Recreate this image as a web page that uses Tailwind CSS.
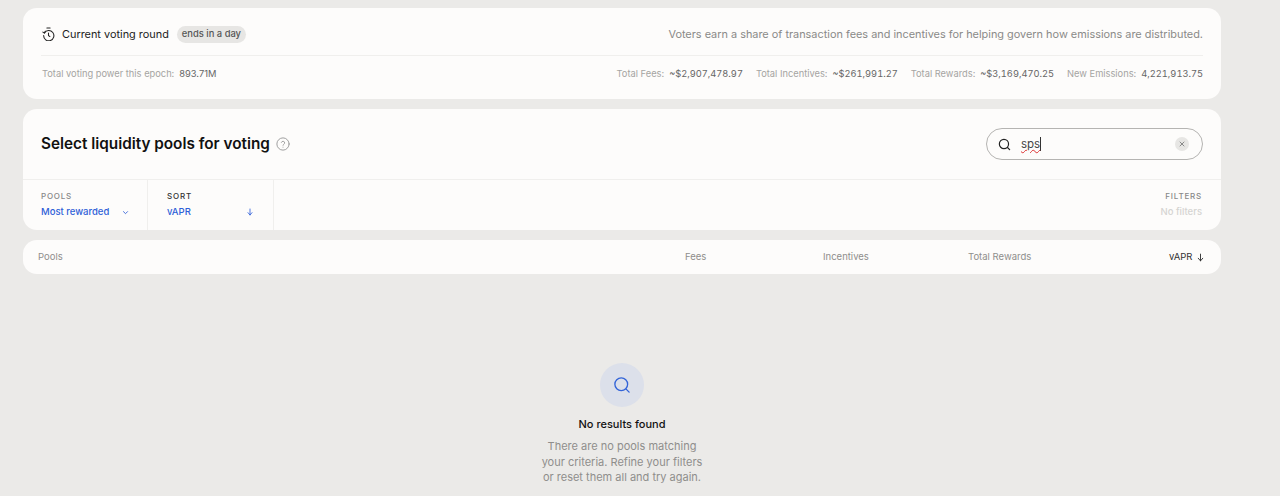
<!DOCTYPE html>
<html lang="en">
  <head>
    <meta charset="UTF-8" />
    <title>Vote</title>
    <script src="https://cdn.jsdelivr.net/npm/@tailwindcss/browser@4"></script>
  </head>
  <body class="bg-[#ebeae8] h-[496px] overflow-hidden font-['Inter',sans-serif] text-[#111]">
    <div class="w-[1198px] ml-[23px] pt-2 flex flex-col">
      <!-- current round -->
      <section class="bg-[#fdfcfb] rounded-[14px] h-[91px] px-[18px]">
        <div class="flex items-center justify-between h-[48px] pt-[5px] border-b border-[#f0efed]">
          <div class="flex items-center">
            <svg class="ml-px w-[13px] h-[14px] text-[#222]" viewBox="0 0 24 26" fill="none" stroke="currentColor" stroke-width="2" stroke-linecap="round" stroke-linejoin="round">
              <path d="M9 2h6" />
              <path d="M4.5 11A9.5 9.5 0 1 1 3 16" />
              <path d="M12 11v5l2.5 1.5" />
              <path d="M1.5 9.5 4.5 11l1.5-3" />
            </svg>
            <span class="ml-[7px] text-[10.9px] leading-4 text-[#222]">Current voting round</span>
            <span class="ml-2 h-[17px] px-[5px] rounded-full bg-[#e7e6e4] text-[#555] text-[9.4px] font-medium flex items-center">ends in a day</span>
          </div>
          <p class="text-[10.9px] text-[#8a8a88]">Voters earn a share of transaction fees and incentives for helping govern how emissions are distributed.</p>
        </div>
        <div class="flex items-center justify-between h-[36px] text-[9.3px] text-[#a5a4a2]">
          <div class="pl-px">Total voting power this epoch:<span class="ml-[5px] text-[#666]">893.71M</span></div>
          <div class="flex gap-[13px]">
            <div>Total Fees:<span class="ml-[5px] text-[#666] tabular-nums">~$2,907,478.97</span></div>
            <div>Total Incentives:<span class="ml-[5px] text-[#666] tabular-nums">~$261,991.27</span></div>
            <div>Total Rewards:<span class="ml-[5px] text-[#666] tabular-nums">~$3,169,470.25</span></div>
            <div>New Emissions:<span class="ml-[5px] text-[#666] tabular-nums">4,221,913.75</span></div>
          </div>
        </div>
      </section>

      <!-- search and filters -->
      <section class="mt-[10px] bg-[#fdfcfb] rounded-[14px] h-[121px]">
        <div class="flex items-center justify-between h-[71px] px-[18px] border-b border-[#f0efed]">
          <div class="flex items-center">
            <h1 class="text-[15.3px] font-semibold leading-5">Select liquidity pools for voting</h1>
            <svg class="ml-[6px] w-[14px] h-[14px] text-[#999]" viewBox="0 0 24 24" fill="none" stroke="currentColor" stroke-width="1.6" stroke-linecap="round" stroke-linejoin="round">
              <circle cx="12" cy="12" r="10.5" />
              <path d="M9.2 9.2a2.9 2.9 0 0 1 5.6 1c0 1.9-2.8 2.4-2.8 4" />
              <path d="M12 17.5h.01" />
            </svg>
          </div>
          <div class="w-[217px] h-8 rounded-full border border-[#b5b4b2] flex items-center pl-[11px] pr-[13px]">
            <svg class="w-[13px] h-[13px] text-[#222]" viewBox="0 0 24 24" fill="none" stroke="currentColor" stroke-width="2.2" stroke-linecap="round">
              <circle cx="11" cy="11" r="8.5" />
              <path d="m17.5 17.5 4 4" />
            </svg>
            <span class="ml-[10px] text-[11.5px] text-[#444] underline decoration-wavy decoration-[#d33] decoration-1 border-r border-[#333] leading-[14px]">sps</span>
            <span class="ml-auto w-[14px] h-[14px] rounded-full bg-[#e7e6e4] flex items-center justify-center">
              <svg class="w-2 h-2 text-[#777]" viewBox="0 0 24 24" fill="none" stroke="currentColor" stroke-width="2.5" stroke-linecap="round">
                <path d="M6 6l12 12M18 6 6 18" />
              </svg>
            </span>
          </div>
        </div>
        <div class="flex h-[50px]">
          <div class="w-[125px] px-[18px] pt-[11px] border-r border-[#f0efed]">
            <div class="text-[8px] leading-[11px] font-medium tracking-[0.1em] text-[#888]">POOLS</div>
            <div class="mt-[3px] flex items-center justify-between text-[9.5px] font-medium text-[#2f5fd8] leading-[14px]">
              Most rewarded
              <svg class="w-[7px] h-[7px]" viewBox="0 0 24 24" fill="none" stroke="currentColor" stroke-width="3" stroke-linecap="round" stroke-linejoin="round"><path d="m5 9 7 7 7-7" /></svg>
            </div>
          </div>
          <div class="w-[126px] px-[19px] pt-[11px] border-r border-[#f0efed]">
            <div class="text-[8px] leading-[11px] font-medium tracking-[0.1em] text-[#333]">SORT</div>
            <div class="mt-[3px] flex items-center justify-between text-[9.5px] font-medium text-[#2f5fd8] leading-[14px]">
              vAPR
              <svg class="w-2 h-2" viewBox="0 0 24 24" fill="none" stroke="currentColor" stroke-width="2.5" stroke-linecap="round" stroke-linejoin="round"><path d="M12 3v18M6 14l6 7 6-7" /></svg>
            </div>
          </div>
          <div class="ml-auto pr-[19px] pt-[11px] text-right">
            <div class="text-[8px] leading-[11px] font-medium tracking-[0.1em] text-[#888]">FILTERS</div>
            <div class="mt-[3px] text-[9.5px] font-medium text-[#d5d4d2] leading-[14px]">No filters</div>
          </div>
        </div>
      </section>

      <!-- table head -->
      <section class="mt-[10px] bg-[#fdfcfb] rounded-[14px] h-[34px] flex items-center pl-[15px] pr-4 text-[9.5px] text-[#8f8e8c]">
        <div class="flex-1">Pools</div>
        <div class="w-[138px]">Fees</div>
        <div class="w-[145px]">Incentives</div>
        <div class="w-[201px]">Total Rewards</div>
        <div class="w-[36px] flex items-center justify-between text-[#333]">
          vAPR
          <svg class="w-[9px] h-[9px]" viewBox="0 0 24 24" fill="none" stroke="currentColor" stroke-width="2.5" stroke-linecap="round" stroke-linejoin="round"><path d="M12 3v18M6 14l6 7 6-7" /></svg>
        </div>
      </section>

      <!-- empty state -->
      <div class="mt-[89px] flex flex-col items-center">
        <div class="w-11 h-11 rounded-full bg-[#dce0ea] flex items-center justify-center">
          <svg class="w-[18px] h-[18px] text-[#3364d8]" viewBox="0 0 24 24" fill="none" stroke="currentColor" stroke-width="1.8" stroke-linecap="round">
            <circle cx="11" cy="11" r="8.5" />
            <path d="m17.5 17.5 4 4" />
          </svg>
        </div>
        <h2 class="mt-[9px] text-[11px] leading-4 font-medium">No results found</h2>
        <p class="mt-[7px] text-[11px] leading-[15.5px] text-[#8f8e8c] text-center">There are no pools matching<br />your criteria. Refine your filters<br />or reset them all and try again.</p>
      </div>
    </div>
  </body>
</html>
